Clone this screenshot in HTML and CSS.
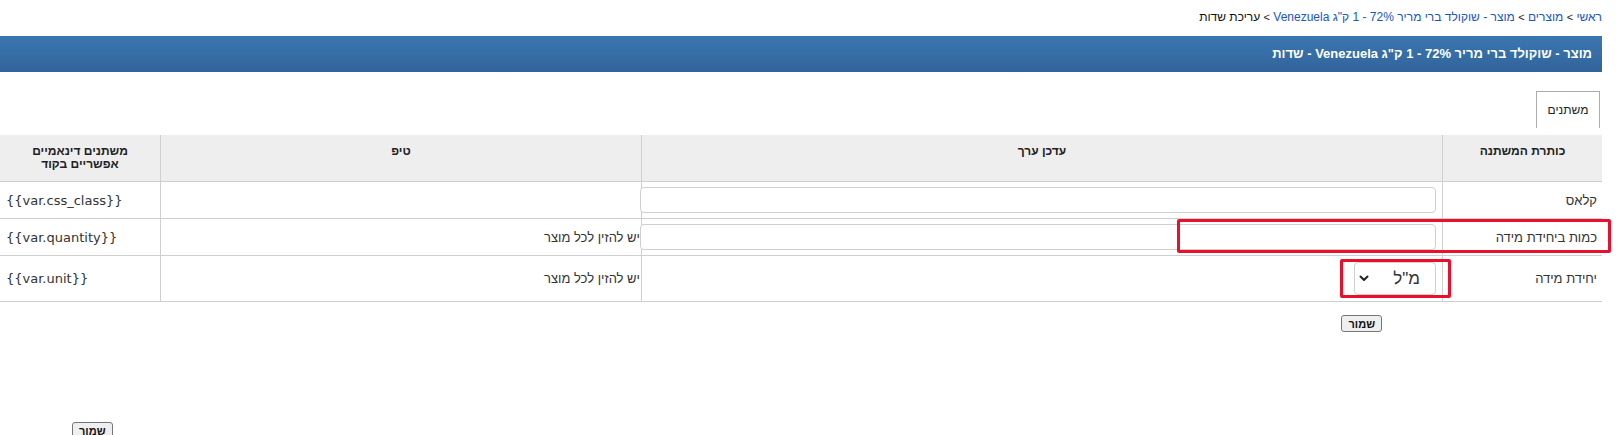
FILE: index.html
```html
<!DOCTYPE html>
<html lang="he" dir="rtl">
<head>
<meta charset="utf-8">
<title>עריכת שדות</title>
<link rel="stylesheet" href="styles.css">
</head>
<body>
  <div class="breadcrumb">
    <a href="#">ראשי</a> <span class="sep">&gt;</span> <a href="#">מוצרים</a> <span class="sep">&gt;</span> <a href="#">מוצר - שוקולד ברי מריר 72% - 1 ק"ג Venezuela</a> <span class="sep">&gt;</span> <span class="current">עריכת שדות</span>
  </div>
  <div class="titlebar">מוצר - שוקולד ברי מריר 72% - 1 ק"ג Venezuela - שדות</div>

  <div class="tabs">
    <div class="tab">משתנים</div>
  </div>

  <table class="fields">
    <colgroup>
      <col class="c-title">
      <col class="c-value">
      <col class="c-tip">
      <col class="c-vars">
    </colgroup>
    <thead>
      <tr class="head-row">
        <th>כותרת המשתנה</th>
        <th>עדכן ערך</th>
        <th>טיפ</th>
        <th class="last">משתנים דינאמיים<br>אפשריים בקוד</th>
      </tr>
    </thead>
    <tbody>
      <tr class="row">
        <td class="name">קלאס</td>
        <td class="value"><input type="text" class="text-input"></td>
        <td class="tip"></td>
        <td class="var last">{{var.css_class}}</td>
      </tr>
      <tr class="row">
        <td class="name">כמות ביחידת מידה</td>
        <td class="value"><input type="text" class="text-input"></td>
        <td class="tip">יש להזין לכל מוצר</td>
        <td class="var last">{{var.quantity}}</td>
      </tr>
      <tr class="row row-tall">
        <td class="name">יחידת מידה</td>
        <td class="value">
          <span class="select-wrap">
            <select class="unit-select"><option>מ"ל</option></select>
            <svg class="chev" width="10" height="7" viewBox="0 0 10 7"><path d="M1.5 1.5 L5 5 L8.5 1.5" fill="none" stroke="#222" stroke-width="2" stroke-linecap="round" stroke-linejoin="round"/></svg>
          </span>
        </td>
        <td class="tip">יש להזין לכל מוצר</td>
        <td class="var last">{{var.unit}}</td>
      </tr>
    </tbody>
  </table>

  <div class="actions">
    <button class="btn" type="button">שמור</button>
  </div>

  <div class="bottom-actions">
    <button class="btn" type="button">שמור</button>
  </div>

  <div class="mark mark-qty"></div>
  <div class="mark mark-unit"></div>
</body>
</html>
```

FILE: styles.css
```css
html, body {
  margin: 0;
  padding: 0;
  background: #fff;
}

body {
  padding-right: 16px;
  font-family: "Liberation Sans", Arial, sans-serif;
  color: #222;
  overflow: hidden;
}

.breadcrumb {
  box-sizing: border-box;
  height: 36px;
  padding-top: 10px;
  font-size: 12px;
  line-height: 15px;
  color: #111;
  white-space: nowrap;
}

.breadcrumb a {
  color: #1a56c0;
  text-decoration: none;
}

.breadcrumb .sep {
  font-size: 11px;
  color: #222;
}

.titlebar {
  box-sizing: border-box;
  height: 36px;
  line-height: 36px;
  padding-right: 10px;
  background: linear-gradient(#3a77b0, #32649a);
  color: #fff;
  font-weight: bold;
  font-size: 13px;
  white-space: nowrap;
}

.tabs {
  display: flex;
  margin-top: 19px;
  padding-right: 2px;
}

.tab {
  box-sizing: border-box;
  width: 64px;
  height: 37px;
  border: 1px solid #ababab;
  border-bottom: none;
  text-align: center;
  line-height: 36px;
  font-size: 12px;
  color: #222;
}

.fields {
  margin-top: 7px;
  width: 1602px;
  table-layout: fixed;
  border-collapse: separate;
  border-spacing: 0;
  font-size: 13px;
}

.c-title { width: 160px; }
.c-value { width: 801px; }
.c-tip { width: 481px; }
.c-vars { width: 160px; }

.fields th,
.fields td {
  box-sizing: border-box;
  border-bottom: 1px solid #cfcfcf;
  border-left: 1px solid #cfcfcf;
  padding: 0;
}

.fields .last {
  border-left: none;
}

.head-row {
  height: 47px;
}

.fields th {
  background: #eeeeee;
  vertical-align: top;
  text-align: center;
  font-weight: bold;
  font-size: 12px;
  line-height: 13px;
  padding-top: 10px;
  color: #222;
}

.row {
  height: 37px;
}

.row-tall {
  height: 46px;
}

.fields td {
  vertical-align: middle;
  color: #333;
}

.fields td.name {
  text-align: right;
  padding-right: 5px;
}

.fields td.value {
  text-align: right;
  padding-right: 6px;
}

.fields td.tip {
  text-align: right;
  padding-right: 1px;
  font-size: 13px;
}

.fields td.var {
  text-align: left;
  padding-left: 6px;
  font-family: "DejaVu Sans", Verdana, sans-serif;
  font-size: 13px;
  direction: ltr;
  color: #333;
}

.text-input {
  box-sizing: border-box;
  display: block;
  width: 796px;
  height: 26px;
  margin: 0;
  border: 1px solid #cfcfcf;
  border-radius: 4px;
  background: #fff;
  font: 13px "Liberation Sans", Arial, sans-serif;
}

.select-wrap {
  position: relative;
  display: inline-block;
  vertical-align: middle;
}

.unit-select {
  -webkit-appearance: none;
  appearance: none;
  box-sizing: border-box;
  width: 82px;
  height: 33px;
  margin: 0;
  padding: 0 15px 0 0;
  border: 1px solid #cfcfcf;
  border-radius: 4px;
  background: #fff;
  font: 17px "Liberation Sans", Arial, sans-serif;
  color: #333;
  direction: rtl;
}

.chev {
  position: absolute;
  left: 5px;
  top: 13px;
  pointer-events: none;
}

.actions {
  display: flex;
  justify-content: flex-start;
  margin-top: 13px;
  padding-right: 220px;
}

.bottom-actions {
  display: flex;
  justify-content: flex-end;
  margin-top: 90px;
  padding-left: 72px;
}

.btn {
  box-sizing: border-box;
  height: 17px;
  padding: 0 6px;
  margin: 0;
  border: 1px solid #767676;
  border-radius: 3px;
  background: #efefef;
  font: bold 11px "Liberation Sans", Arial, sans-serif;
  line-height: 14px;
  color: #111;
}

.mark {
  position: absolute;
  box-sizing: border-box;
  border: 3px solid #e8102c;
  border-radius: 2px;
}

.mark-qty {
  left: 1177px;
  top: 219px;
  width: 434px;
  height: 34px;
}

.mark-unit {
  left: 1340px;
  top: 259px;
  width: 111px;
  height: 39px;
}
```
